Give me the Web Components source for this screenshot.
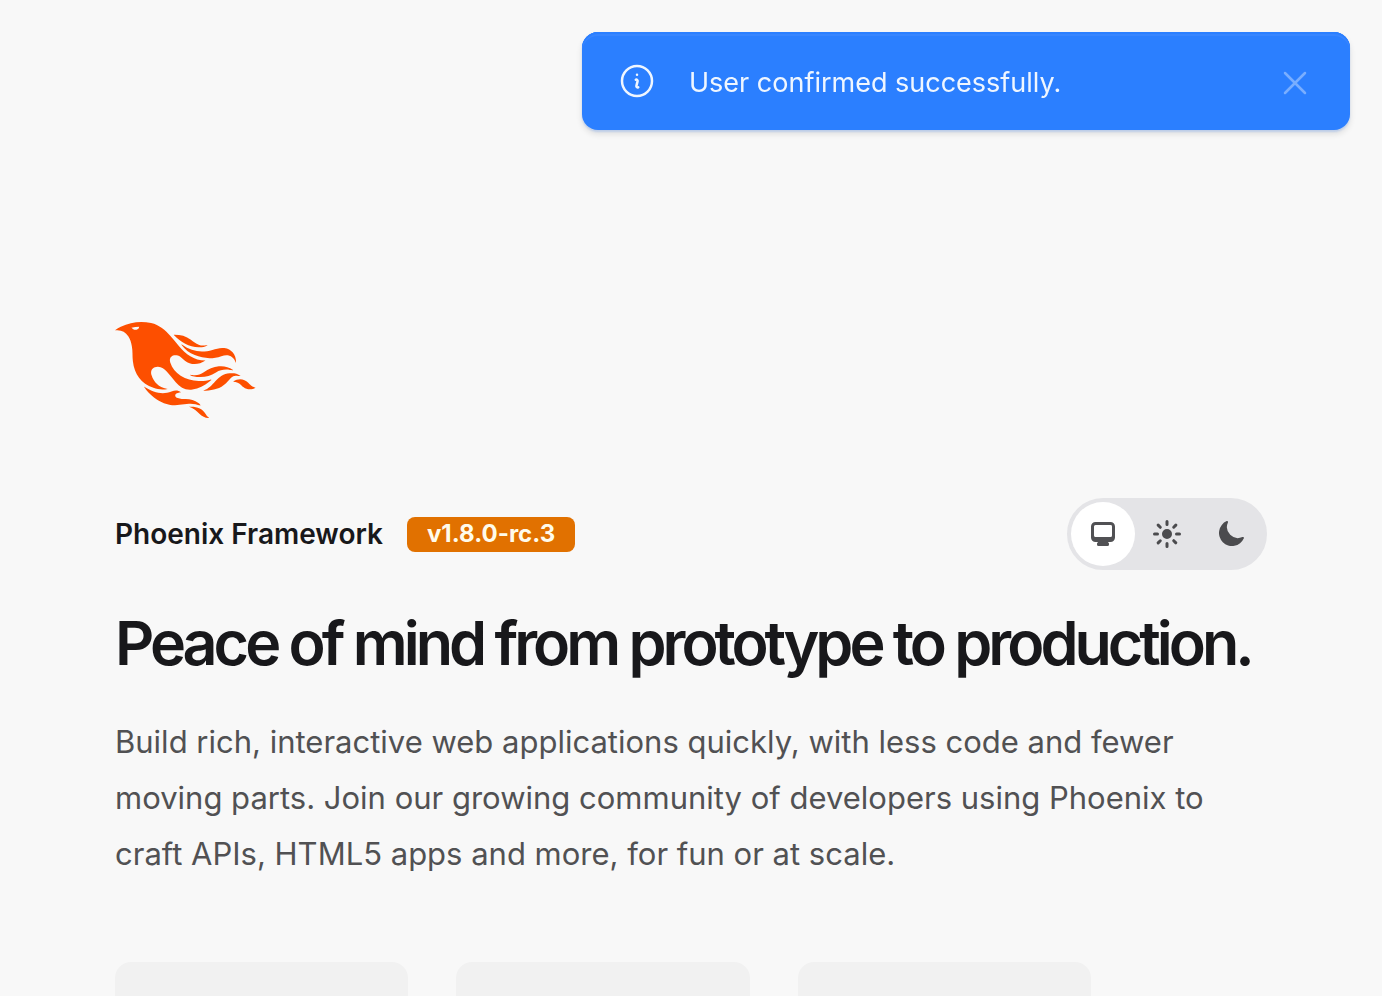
<!DOCTYPE html>
<html lang="en">
<head>
<meta charset="utf-8">
<meta name="viewport" content="width=device-width, initial-scale=1">
<title>Phoenix Framework</title>
<style>
  html { scrollbar-width: none; }
  body {
    margin: 0;
    background: #f8f8f8;
    color: #18181b;
    font-family: Inter, "Liberation Sans", sans-serif;
  }
</style>
</head>
<body>
<flash-toast>User confirmed successfully.</flash-toast>
<home-page>
  <phoenix-logo></phoenix-logo>
  <title-bar>
    <span>Phoenix Framework</span>
    <version-badge slot="badge">v1.8.0-rc.3</version-badge>
    <theme-toggle slot="end"></theme-toggle>
  </title-bar>
  <hero-copy>
    <span slot="headline">Peace of mind from prototype to production.</span>
    Build rich, interactive web applications quickly, with less code and fewer moving parts. Join our growing community of developers using Phoenix to craft APIs, HTML5 apps and more, for fun or at scale.
  </hero-copy>
  <link-cards>
    <link-card href="#guides" label="Guides &amp; Docs"></link-card>
    <link-card href="#source" label="Source Code"></link-card>
    <link-card href="#changelog" label="Changelog"></link-card>
  </link-cards>
</home-page>

<script>
const define = (name, html, setup) => {
  const template = document.createElement('template');
  template.innerHTML = html;
  customElements.define(name, class extends HTMLElement {
    constructor() {
      super();
      this.attachShadow({ mode: 'open' }).append(template.content.cloneNode(true));
    }
    connectedCallback() {
      if (setup) setup(this, this.shadowRoot);
    }
  });
};

define('flash-toast', `
<style>
  :host {
    position: fixed; top: 32px; right: 32px; z-index: 10;
    box-sizing: border-box; width: 768px; max-width: calc(100vw - 64px);
    display: flex; align-items: flex-start; gap: 32px;
    padding: 29px 35px 27px;
    border-radius: 16px;
    background: #2b7fff; color: #eff6ff;
    font-size: 27px; line-height: 40px;
    box-shadow: inset 0 2px 0 #2b7fff, inset 0 4px 0 #3785ff, 0 2px 2px #2b7fff33, 0 4px 6px #0000001c;
  }
  svg { display: block; width: 40px; height: 40px; fill: none; stroke: currentColor; stroke-width: 1.5; stroke-linecap: round; stroke-linejoin: round; }
  p, button { margin: 0; padding: 2px 0 0; }
  p { flex: 1; }
  button { border: 0; background: none; color: inherit; cursor: pointer; }
  button svg { opacity: .4; }
  button:hover svg { opacity: .7; }
</style>
<svg viewBox="0 0 24 24" aria-hidden="true"><path d="m11.25 11.25.041-.02a.75.75 0 0 1 1.063.852l-.708 2.836a.75.75 0 0 0 1.063.853l.041-.021M21 12a9 9 0 1 1-18 0 9 9 0 0 1 18 0Zm-9-3.75h.008v.008H12V8.25Z"/></svg>
<p role="alert"><slot></slot></p>
<button type="button" aria-label="close"><svg viewBox="0 0 24 24" aria-hidden="true"><path d="M6 18 18 6M6 6l12 12"/></svg></button>
`, (host, root) => {
  root.querySelector('button').addEventListener('click', () => host.remove());
});

define('home-page', `
<style>
  :host { display: block; padding: 322px 64px 80px; }
  main { max-width: 1152px; margin: 0 auto; }
</style>
<main><slot></slot></main>
`);

define('phoenix-logo', `
<style>
  :host { display: block; }
  svg { display: block; height: 96px; }
</style>
<svg viewBox="0 0 71 48" fill="#fd4f00" aria-hidden="true"><path d="m26.371 33.477-.552-.1c-3.92-.729-6.397-3.1-7.57-6.829-.733-2.324.597-4.035 3.035-4.148 1.995-.092 3.362 1.055 4.57 2.39 1.557 1.72 2.984 3.558 4.514 5.305 2.202 2.515 4.797 4.134 8.347 3.634 3.183-.448 5.958-1.725 8.371-3.828.363-.316.761-.592 1.144-.886l-.241-.284c-2.027.63-4.093.841-6.205.735-3.195-.16-6.24-.828-8.964-2.582-2.486-1.601-4.319-3.746-5.19-6.611-.704-2.315.736-3.934 3.135-3.6.948.133 1.746.56 2.463 1.165.583.493 1.143 1.015 1.738 1.493 2.8 2.25 6.712 2.375 10.265-.068-5.842-.026-9.817-3.24-13.308-7.313-1.366-1.594-2.7-3.216-4.095-4.785-2.698-3.036-5.692-5.71-9.79-6.623C12.8-.623 7.745.14 2.893 2.361 1.926 2.804.997 3.319 0 4.149c.494 0 .763.006 1.032 0 2.446-.064 4.28 1.023 5.602 3.024.962 1.457 1.415 3.104 1.761 4.798.513 2.515.247 5.078.544 7.605.761 6.494 4.08 11.026 10.26 13.346 2.267.852 4.591 1.135 7.172.555ZM10.751 3.852c-.976.246-1.756-.148-2.56-.962 1.377-.343 2.592-.476 3.897-.528-.107.848-.607 1.306-1.336 1.49Zm32.002 37.924c-.085-.626-.62-.901-1.04-1.228-1.857-1.446-4.03-1.958-6.333-2-1.375-.026-2.735-.128-4.031-.61-.595-.22-1.26-.505-1.244-1.272.015-.78.693-1 1.31-1.184.505-.15 1.026-.247 1.6-.382-1.46-.936-2.886-1.065-4.787-.3-2.993 1.202-5.943 1.06-8.926-.017-1.684-.608-3.179-1.563-4.735-2.408l-.077.057c1.29 2.115 3.034 3.817 5.004 5.271 3.793 2.8 7.936 4.471 12.784 3.73A66.714 66.714 0 0 1 37 40.877c1.98-.16 3.866.398 5.753.899Zm-9.14-30.345c-.105-.076-.206-.266-.42-.069 1.745 2.36 3.985 4.098 6.683 5.193 4.354 1.767 8.773 2.07 13.293.51 3.51-1.21 6.033-.028 7.343 3.38.19-3.955-2.137-6.837-5.843-7.401-2.084-.318-4.01.373-5.962.94-5.434 1.575-10.485.798-15.094-2.553Zm27.085 15.425c.708.059 1.416.123 2.124.185-1.6-1.405-3.55-1.517-5.523-1.404-3.003.17-5.167 1.903-7.14 3.972-1.739 1.824-3.31 3.87-5.903 4.604.043.078.054.117.066.117.35.005.699.021 1.047.005 3.768-.17 7.317-.965 10.14-3.7.89-.86 1.685-1.817 2.544-2.71.716-.746 1.584-1.159 2.645-1.07Zm-8.753-4.67c-2.812.246-5.254 1.409-7.548 2.943-1.766 1.18-3.654 1.738-5.776 1.37-.374-.066-.75-.114-1.124-.17l-.013.156c.135.07.265.151.405.207.354.14.702.308 1.07.395 4.083.971 7.992.474 11.516-1.803 2.221-1.435 4.521-1.707 7.013-1.336.252.038.503.083.756.107.234.022.479.255.795.003-2.179-1.574-4.526-2.096-7.094-1.872Zm-10.049-9.544c1.475.051 2.943-.142 4.486-1.059-.452.04-.643.04-.827.076-2.126.424-4.033-.04-5.733-1.383-.623-.493-1.257-.974-1.889-1.457-2.503-1.914-5.374-2.555-8.514-2.5.05.154.054.26.108.315 3.417 3.455 7.371 5.836 12.369 6.008Zm24.727 17.731c-2.114-2.097-4.952-2.367-7.578-.537 1.738.078 3.043.632 4.101 1.728a13 13 0 0 0 1.182 1.106c1.6 1.29 4.311 1.352 5.896.155-1.861-.726-1.861-.726-3.601-2.452Zm-21.058 16.06c-1.858-3.46-4.981-4.24-8.59-4.008a9.667 9.667 0 0 1 2.977 1.39c.84.586 1.547 1.311 2.243 2.055 1.38 1.473 3.534 2.376 4.962 2.07-.656-.412-1.238-.848-1.592-1.507Z"/></svg>
`);

define('title-bar', `
<style>
  :host { display: flex; align-items: center; justify-content: space-between; margin-top: 80px; }
  h1 { display: flex; align-items: center; gap: 24px; margin: 0; font-size: 28px; line-height: 48px; font-weight: 600; }
</style>
<h1><slot></slot><slot name="badge"></slot></h1>
<slot name="end"></slot>
`);

define('version-badge', `
<style>
  :host {
    display: inline-flex; align-items: center; height: 35px; padding: 0 20px;
    border-radius: 8px; background: #e17100; color: #fffbeb;
    font-size: 24px; line-height: 32px; font-weight: 700;
  }
</style>
<slot></slot>
`);

define('theme-toggle', `
<style>
  :host { display: flex; border: 4px solid #e4e4e7; border-radius: 36px; background: #e4e4e7; }
  button {
    display: grid; place-items: center; width: 64px; height: 64px; margin: 0; padding: 0;
    border: 0; border-radius: 50%; background: none; color: #18181b; cursor: pointer;
  }
  button[aria-pressed="true"] { background: #fff; }
  svg { display: block; width: 32px; height: 32px; fill: currentColor; opacity: .75; }
</style>
<button type="button" aria-label="System theme" aria-pressed="true"><svg viewBox="0 0 16 16" aria-hidden="true"><path fill-rule="evenodd" d="M2 4.25A2.25 2.25 0 0 1 4.25 2h7.5A2.25 2.25 0 0 1 14 4.25v5.5A2.25 2.25 0 0 1 11.75 12h-1.312c.1.128.21.248.328.36a.75.75 0 0 1 .234.545v.345a.75.75 0 0 1-.75.75h-4.5a.75.75 0 0 1-.75-.75v-.345a.75.75 0 0 1 .234-.545c.118-.111.228-.232.328-.36H4.25A2.25 2.25 0 0 1 2 9.75v-5.5Zm2.25-.75a.75.75 0 0 0-.75.75v4.5c0 .414.336.75.75.75h7.5a.75.75 0 0 0 .75-.75v-4.5a.75.75 0 0 0-.75-.75h-7.5Z"/></svg></button>
<button type="button" aria-label="Light theme" aria-pressed="false"><svg viewBox="0 0 16 16" aria-hidden="true"><path d="M8 1a.75.75 0 0 1 .75.75v1.5a.75.75 0 0 1-1.5 0v-1.5A.75.75 0 0 1 8 1ZM10.5 8a2.5 2.5 0 1 1-5 0 2.5 2.5 0 0 1 5 0ZM12.95 4.11a.75.75 0 1 0-1.06-1.06l-1.062 1.06a.75.75 0 0 0 1.061 1.062l1.06-1.061ZM15 8a.75.75 0 0 1-.75.75h-1.5a.75.75 0 0 1 0-1.5h1.5A.75.75 0 0 1 15 8ZM11.89 12.95a.75.75 0 0 0 1.06-1.06l-1.06-1.062a.75.75 0 0 0-1.062 1.061l1.061 1.06ZM8 12a.75.75 0 0 1 .75.75v1.5a.75.75 0 0 1-1.5 0v-1.5A.75.75 0 0 1 8 12ZM5.172 11.89a.75.75 0 0 0-1.061-1.062L3.05 11.89a.75.75 0 1 0 1.06 1.06l1.06-1.06ZM4 8a.75.75 0 0 1-.75.75h-1.5a.75.75 0 0 1 0-1.5h1.5A.75.75 0 0 1 4 8ZM4.11 5.172A.75.75 0 0 0 5.173 4.11L4.11 3.05a.75.75 0 1 0-1.06 1.06l1.06 1.06Z"/></svg></button>
<button type="button" aria-label="Dark theme" aria-pressed="false"><svg viewBox="0 0 16 16" aria-hidden="true"><path d="M14.438 10.148c.19-.425-.321-.787-.748-.601A5.5 5.5 0 0 1 6.453 2.31c.186-.427-.176-.938-.6-.748a6.501 6.501 0 1 0 8.585 8.586Z"/></svg></button>
`, (host, root) => {
  const buttons = root.querySelectorAll('button');
  buttons.forEach(button => button.addEventListener('click', () => {
    buttons.forEach(other => other.setAttribute('aria-pressed', String(other === button)));
  }));
});

define('hero-copy', `
<style>
  :host { display: block; }
  h2 { margin: 32px 0 0; font-size: 61px; line-height: 82px; font-weight: 600; letter-spacing: -4px; }
  p { margin: 30px 0 0; font-size: 31px; line-height: 56px; color: #515153; }
</style>
<h2><slot name="headline"></slot></h2>
<p><slot></slot></p>
`);

define('link-cards', `
<style>
  :host { display: grid; grid-template-columns: repeat(3, 1fr); gap: 48px; max-width: 976px; margin-top: 80px; }
</style>
<slot></slot>
`);

define('link-card', `
<style>
  :host { display: block; }
  a { display: block; height: 192px; border-radius: 16px; background: #f1f1f1; }
</style>
<a></a>
`, (host, root) => {
  const link = root.querySelector('a');
  link.href = host.getAttribute('href');
  link.setAttribute('aria-label', host.getAttribute('label'));
});
</script>
</body>
</html>
